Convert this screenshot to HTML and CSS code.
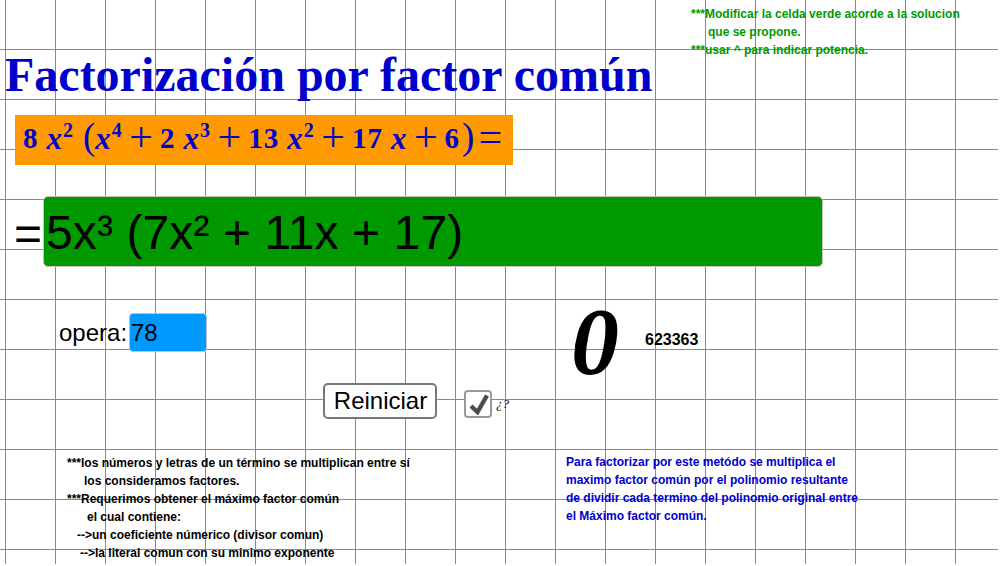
FILE: index.html
```html
<!DOCTYPE html>
<html lang="es">
<head>
    <meta charset="UTF-8">
    <title>Factorización por factor común</title>
    <link rel="stylesheet" href="styles.css">
</head>
<body>

<div class="canvas">
    <div class="note note-top">
        <div>***Modificar la celda verde acorde a la solucion</div>
        <div class="in-17">que se propone.</div>
        <div>***usar ^ para indicar potencia.</div>
    </div>

    <h1 class="title">Factorización por factor común</h1>

    <div class="formula">
        <span class="n">8</span><i class="v">x</i><sup>2</sup>
        <span class="paren open">(</span><i class="v first">x</i><sup>4</sup>
        <span class="op">+</span><span class="n">2</span><i class="v">x</i><sup>3</sup>
        <span class="op">+</span><span class="n">13</span><i class="v">x</i><sup>2</sup>
        <span class="op">+</span><span class="n">17</span><i class="v">x</i>
        <span class="op">+</span><span class="n">6</span><span class="paren">)</span>
        <span class="op eq">=</span>
    </div>

    <div class="equals">=</div>
    <div class="answer-field">5x³ (7x² + 11x + 17)</div>

    <div class="opera-label">opera:</div>
    <div class="opera-field">78</div>

    <button type="button" class="reset-btn">Reiniciar</button>

    <div class="check">
        <svg width="24" height="24" viewBox="0 0 24 24">
            <path d="M5 14 L11.5 20 L21 3.5" fill="none" stroke="#4d4d4d" stroke-width="4.4"/>
        </svg>
    </div>
    <div class="check-label">¿?</div>

    <div class="big-zero">0</div>
    <div class="counter">623363</div>

    <div class="note note-left">
        <div>***los números y letras de un término se multiplican entre sí</div>
        <div class="in-17">los consideramos factores.</div>
        <div>***Requerimos obtener el máximo factor común</div>
        <div class="in-20">el cual contiene:</div>
        <div class="in-10">--&gt;un coeficiente númerico (divisor comun)</div>
        <div class="in-13">--&gt;la literal comun con su minimo exponente</div>
    </div>

    <div class="note note-right">
        <div>Para factorizar por este metódo se multiplica el</div>
        <div>maximo factor común por el polinomio resultante</div>
        <div>de dividir cada termino del polinomio original entre</div>
        <div>el Máximo factor común.</div>
    </div>
</div>

</body>
</html>
```

FILE: styles.css
```css
body {
    margin: 0;
    background: #fff;
    font-family: "Liberation Sans", Arial, sans-serif;
    color: #000;
}

.canvas {
    position: relative;
    width: 998px;
    height: 564px;
    overflow: hidden;
    background-color: #fff;
    background-image:
        linear-gradient(to right, transparent 49px, #ea6c1c 49px),
        linear-gradient(to bottom, transparent 49px, #ea6c1c 49px);
    background-size: 50px 50px;
    background-position: 6px 0, 0 0;
}

.title {
    position: absolute;
    left: 5px;
    top: 47px;
    margin: 0;
    font-family: "Liberation Serif", "Times New Roman", serif;
    font-size: 48px;
    line-height: 56px;
    font-weight: bold;
    white-space: nowrap;
    color: #0000cc;
}

.formula {
    position: absolute;
    left: 15px;
    top: 115px;
    width: 498px;
    height: 50px;
    box-sizing: border-box;
    padding: 0 0 4px 8px;
    display: flex;
    align-items: center;
    background-color: #ff9900;
    color: #0000cc;
    font-family: "Liberation Serif", "Times New Roman", serif;
    font-size: 29px;
    font-weight: bold;
    white-space: nowrap;
}

.formula .n {
    letter-spacing: 1px;
}

.formula .v {
    margin-left: 8px;
    font-size: 31px;
    line-height: 1;
}

.formula .v.first {
    margin-left: 0;
}

.formula sup {
    font-size: 20px;
    line-height: 1;
    margin: -16px 0 0 1px;
    vertical-align: baseline;
}

.formula .paren {
    font-size: 37px;
    font-weight: normal;
    line-height: 1;
    margin: -4px 0 0 2px;
}

.formula .paren.open {
    margin-left: 10px;
}

.formula .op {
    font-size: 42px;
    font-weight: normal;
    line-height: 1;
    margin: -2px 7px 0 7.5px;
}

.formula .op.eq {
    margin-left: 4px;
}

.equals {
    position: absolute;
    left: 14px;
    top: 206px;
    font-size: 48px;
    line-height: 55px;
}

.answer-field {
    position: absolute;
    left: 43px;
    top: 196px;
    width: 780px;
    height: 71px;
    box-sizing: border-box;
    padding: 0 2px;
    background-color: #009900;
    border: 1px solid #c4c4c4;
    border-radius: 5px;
    font-size: 48px;
    line-height: 72px;
    letter-spacing: 0.1px;
    white-space: nowrap;
}

.opera-label {
    position: absolute;
    left: 59px;
    top: 319px;
    font-size: 24px;
    line-height: 28px;
}

.opera-field {
    position: absolute;
    left: 129px;
    top: 313px;
    width: 78px;
    height: 39px;
    box-sizing: border-box;
    padding-left: 1px;
    background-color: #0099ff;
    border: 1px solid #b4c6d2;
    border-radius: 4px;
    font-size: 24px;
    line-height: 37px;
}

.reset-btn {
    position: absolute;
    left: 323px;
    top: 383px;
    width: 114px;
    height: 36px;
    padding: 0 0 0 1px;
    background: #fff;
    border: 2px solid #777;
    border-radius: 5px;
    font-family: inherit;
    font-size: 24px;
    color: #000;
}

.check {
    position: absolute;
    left: 464px;
    top: 390px;
    width: 28px;
    height: 28px;
    box-sizing: border-box;
    background: #fff;
    border: 2px solid #999;
    border-radius: 4px;
}

.check svg {
    display: block;
}

.check-label {
    position: absolute;
    left: 496px;
    top: 396px;
    font-family: "Liberation Serif", serif;
    font-style: italic;
    font-size: 13px;
    line-height: 15px;
}

.big-zero {
    position: absolute;
    left: 571px;
    top: 288px;
    font-family: "Liberation Serif", serif;
    font-style: italic;
    font-weight: bold;
    font-size: 96px;
    line-height: 108px;
}

.counter {
    position: absolute;
    left: 645px;
    top: 331px;
    font-size: 16px;
    line-height: 18px;
    font-weight: bold;
}

.note {
    position: absolute;
    font-size: 12px;
    line-height: 18px;
    font-weight: bold;
    white-space: nowrap;
}

.note-top {
    left: 691px;
    top: 5px;
    color: #009900;
}

.note-left {
    left: 67px;
    top: 454px;
}

.note-right {
    left: 566px;
    top: 453px;
    color: #0000cc;
}

.in-10 {
    padding-left: 10px;
}

.in-13 {
    padding-left: 13px;
}

.in-17 {
    padding-left: 17px;
}

.in-20 {
    padding-left: 20px;
}
```
